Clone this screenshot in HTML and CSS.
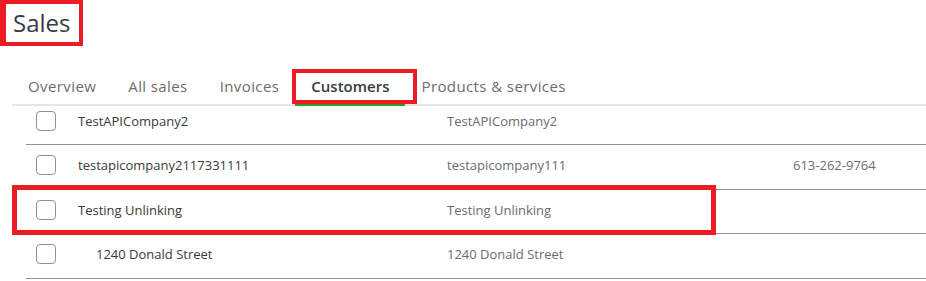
FILE: index.html
```html
<!DOCTYPE html>
<html lang="en">
<head>
<meta charset="utf-8">
<title>Sales - Customers</title>
<link rel="stylesheet" href="styles.css">
</head>
<body>
<header class="page-head">
  <h1 class="title">Sales</h1>
</header>
<nav class="tabs">
  <a class="tab">Overview</a>
  <a class="tab">All sales</a>
  <a class="tab">Invoices</a>
  <a class="tab tab--active">Customers<span class="mark mark--tab"></span></a>
  <a class="tab">Products &amp; services</a>
</nav>
<div class="table-wrap">
  <div class="rows">
    <div class="row">
      <span class="cell cell--check"><span class="checkbox"></span></span>
      <span class="cell cell--name">TestAPICompany2</span>
      <span class="cell cell--company">TestAPICompany2</span>
      <span class="cell cell--phone"></span>
    </div>
    <div class="row">
      <span class="cell cell--check"><span class="checkbox"></span></span>
      <span class="cell cell--name">testapicompany2117331111</span>
      <span class="cell cell--company">testapicompany111</span>
      <span class="cell cell--phone">613-262-9764</span>
    </div>
    <div class="row">
      <span class="cell cell--check"><span class="checkbox"></span></span>
      <span class="cell cell--name">Testing Unlinking</span>
      <span class="cell cell--company">Testing Unlinking</span>
      <span class="cell cell--phone"></span>
      <span class="mark mark--row"></span>
    </div>
    <div class="row">
      <span class="cell cell--check"><span class="checkbox"></span></span>
      <span class="cell cell--name cell--sub">1240 Donald Street</span>
      <span class="cell cell--company">1240 Donald Street</span>
      <span class="cell cell--phone"></span>
    </div>
  </div>
</div>
</body>
</html>
```

FILE: styles.css
```css
* { box-sizing: border-box; }

html, body {
  margin: 0;
  padding: 0;
  background: #ffffff;
}

body {
  width: 926px;
  height: 281px;
  overflow: hidden;
  font-family: "Open Sans", Lato, "Liberation Sans", sans-serif;
  color: #393a3d;
}

.page-head {
  display: flex;
}

.title {
  margin: 0;
  display: inline-block;
  border: 4px solid #ed1c24;
  border-left-width: 6px;
  padding: 0 9px 0 7px;
  height: 46px;
  font-size: 24px;
  line-height: 38px;
  font-weight: 400;
  color: #393a3d;
}

.tabs {
  display: flex;
  margin: 20px 0 0 12px;
  border-bottom: 2px solid #e3e5e8;
}

.tab {
  position: relative;
  padding: 10px 16px 8px;
  font-size: 15px;
  line-height: 20px;
  letter-spacing: 0.4px;
  color: #6b6c72;
  text-decoration: none;
}

.tab--active {
  color: #393a3d;
  font-weight: 600;
  letter-spacing: 0;
}

.tab--active::after {
  content: "";
  position: absolute;
  left: 0;
  right: 0;
  bottom: -2px;
  height: 3px;
  background: #2ca01c;
}

.mark {
  position: absolute;
  border: 4px solid #ed1c24;
  z-index: 2;
  pointer-events: none;
}

.mark--tab {
  left: -3px;
  right: -12px;
  top: 3px;
  bottom: 0;
}

.table-wrap {
  margin-left: 12px;
  padding-left: 14px;
  height: 175px;
  overflow: hidden;
}

.rows {
  margin-top: -5.5px;
}

.row {
  position: relative;
  display: grid;
  grid-template-columns: 52px 369px 346px 1fr;
  align-items: center;
  height: 44.5px;
  padding-bottom: 3px;
  border-bottom: 1px solid #8d9096;
  font-size: 13px;
}

.cell--check {
  padding-left: 10px;
  display: flex;
}

.checkbox {
  width: 20px;
  height: 20px;
  border: 1px solid #8d9096;
  border-radius: 4px;
  background: #fff;
}

.cell--name {
  color: #393a3d;
  font-weight: 500;
}

.cell--sub {
  padding-left: 18px;
}

.cell--company,
.cell--phone {
  color: #6b6c72;
}

.mark--row {
  border-width: 5px;
  left: -14px;
  width: 704px;
  top: -5px;
  bottom: -2px;
}
```
